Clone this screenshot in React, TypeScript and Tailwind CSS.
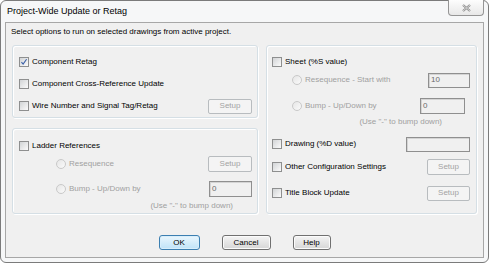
import type { ReactNode } from "react";

function CheckBox({ checked = false }: { checked?: boolean }) {
  return (
    <span className="relative w-[10px] h-[10px] shrink-0 border border-[#8e8f8f] bg-linear-to-br from-[#d2d4d6] to-[#fbfbfb]">
      {checked && (
        <svg viewBox="0 0 10 10" className="absolute inset-0 w-full h-full">
          <path d="M1.8 5.2 L3.9 7.6 L8.2 1.6" fill="none" stroke="#3a5fa8" strokeWidth="1.4" />
        </svg>
      )}
    </span>
  );
}

function Radio() {
  return (
    <span className="w-[10px] h-[10px] shrink-0 rounded-full border border-[#c9c9c9] bg-linear-to-br from-[#e6e6e6] to-[#fafafa]" />
  );
}

function SetupButton({ className = "" }: { className?: string }) {
  return (
    <span
      className={`flex items-center justify-center rounded-[2px] border border-[#b8bcbf] bg-[#f4f4f4] text-[#a3a3a3] ${className}`}
    >
      Setup
    </span>
  );
}

function TextBox({ value = "", className = "" }: { value?: string; className?: string }) {
  return (
    <span
      className={`flex items-center pl-[2px] border border-[#8f8f8f] bg-[#f0f0f0] shadow-[inset_1px_1px_0_#d4d4d4] text-[#6a6a6a] ${className}`}
    >
      {value}
    </span>
  );
}

function CheckRow({ label, checked, className = "", children }: { label: string; checked?: boolean; className?: string; children?: ReactNode }) {
  return (
    <div className={`flex items-center ${className}`}>
      <CheckBox checked={checked} />
      <span className="ml-[3px]">{label}</span>
      {children}
    </div>
  );
}

function RadioRow({ label, className = "", children }: { label: string; className?: string; children?: ReactNode }) {
  return (
    <div className={`flex items-center ${className}`}>
      <Radio />
      <span className="ml-[3px] text-[#a0a0a0]">{label}</span>
      {children}
    </div>
  );
}

function DialogButton({ children, primary = false, className = "" }: { children: ReactNode; primary?: boolean; className?: string }) {
  return (
    <span
      className={`flex items-center justify-center h-[15px] rounded-[3px] border ${
        primary
          ? "border-[#3c7fb1] bg-linear-to-b from-[#eaf6fd] to-[#bfe3f8] shadow-[inset_0_0_0_1px_#d8eefb]"
          : "border-[#707070] bg-linear-to-b from-[#f4f4f4] to-[#d6d6d6] shadow-[inset_0_0_0_1px_#fbfbfb]"
      } ${className}`}
    >
      {children}
    </span>
  );
}

const groupBox = "border border-[#d5dfe5] rounded-[3px] shadow-[inset_1px_1px_0_#ffffff,1px_1px_0_#ffffff]";

export default function App() {
  return (
    <div className="w-[489px] h-[263px] bg-white font-['Liberation_Sans',Arial,sans-serif] text-[8px] leading-none text-black select-none">
      <div className="w-full h-full flex flex-col border border-[#7b7b7b] rounded-[6px] bg-[#f6f7f8]">
        {/* Title bar */}
        <div className="h-[21px] flex items-center justify-between pl-[6px] pr-[4px]">
          <span className="text-[9px]">Project-Wide Update or Retag</span>
          <span className="self-start -mt-px w-[36px] h-[16px] flex items-center justify-center border border-t-0 border-[#959595] rounded-b-[4px] bg-linear-to-b from-[#fdfdfd] to-[#e8e8e8]">
            <svg viewBox="0 0 9 8" className="w-[9px] h-[8px]">
              <path d="M1 1 L8 7 M8 1 L1 7" stroke="#8a8a8a" strokeWidth="2.2" />
              <path d="M1 1 L8 7 M8 1 L1 7" stroke="#f2f2f2" strokeWidth="0.7" />
            </svg>
          </span>
        </div>

        {/* Client area */}
        <div className="flex-1 mx-[4px] mb-[4px] border border-[#a7a7a7] bg-[#f0f0f0] flex flex-col">
          <div className="h-[22px] pt-[5px] pl-[5px]">
            Select options to run on selected drawings from active project.
          </div>

          <div className="flex gap-[8px] px-[6px]">
            <div className="w-[246px] flex flex-col gap-[10px]">
              <div className={`h-[73px] pt-[5px] pl-[6px] pr-[5px] flex flex-col ${groupBox}`}>
                <CheckRow label="Component Retag" checked className="h-[22px]" />
                <CheckRow label="Component Cross-Reference Update" className="h-[22px]" />
                <CheckRow label="Wire Number and Signal Tag/Retag" className="h-[22px]">
                  <SetupButton className="ml-auto w-[44px] h-[15px]" />
                </CheckRow>
              </div>

              <div className={`h-[86px] pt-[8px] pl-[6px] pr-[5px] flex flex-col ${groupBox}`}>
                <CheckRow label="Ladder References" className="h-[18px]" />
                <RadioRow label="Resequence" className="h-[18px] pl-[37px]">
                  <SetupButton className="ml-auto w-[44px] h-[16px]" />
                </RadioRow>
                <RadioRow label="Bump - Up/Down by" className="mt-[8px] h-[16px] pl-[37px]">
                  <TextBox value="0" className="ml-auto w-[43px] h-[16px]" />
                </RadioRow>
                <div className="mt-[4px] h-[10px] flex items-center justify-end pr-[19px] text-[#a0a0a0]">
                  (Use "-" to bump down)
                </div>
              </div>
            </div>

            <div className={`w-[211px] h-[169px] pt-[7px] pl-[5px] pr-[6px] flex flex-col ${groupBox}`}>
              <CheckRow label="Sheet (%S value)" className="h-[18px]" />
              <RadioRow label="Resequence - Start with" className="h-[18px] pl-[20px]">
                <TextBox value="10" className="ml-auto w-[42px] h-[15px]" />
              </RadioRow>
              <RadioRow label="Bump - Up/Down by" className="mt-[9px] h-[16px] pl-[20px]">
                <TextBox value="0" className="ml-auto mr-[5px] w-[45px] h-[16px]" />
              </RadioRow>
              <div className="mt-[3px] h-[10px] flex items-center justify-end pr-[28px] text-[#a0a0a0]">
                (Use "-" to bump down)
              </div>
              <CheckRow label="Drawing (%D value)" className="mt-[9px] h-[16px]">
                <TextBox className="ml-auto w-[64px] h-[15px]" />
              </CheckRow>
              <CheckRow label="Other Configuration Settings" className="mt-[7px] h-[16px]">
                <SetupButton className="ml-auto w-[43px] h-[16px]" />
              </CheckRow>
              <CheckRow label="Title Block Update" className="mt-[10px] h-[16px]">
                <SetupButton className="ml-auto w-[43px] h-[15px]" />
              </CheckRow>
            </div>
          </div>

          <div className="mt-[21px] flex justify-center gap-[22px]">
            <DialogButton primary className="w-[41px]">OK</DialogButton>
            <DialogButton className="w-[49px]">Cancel</DialogButton>
            <DialogButton className="w-[38px]">Help</DialogButton>
          </div>
        </div>
      </div>
    </div>
  );
}
